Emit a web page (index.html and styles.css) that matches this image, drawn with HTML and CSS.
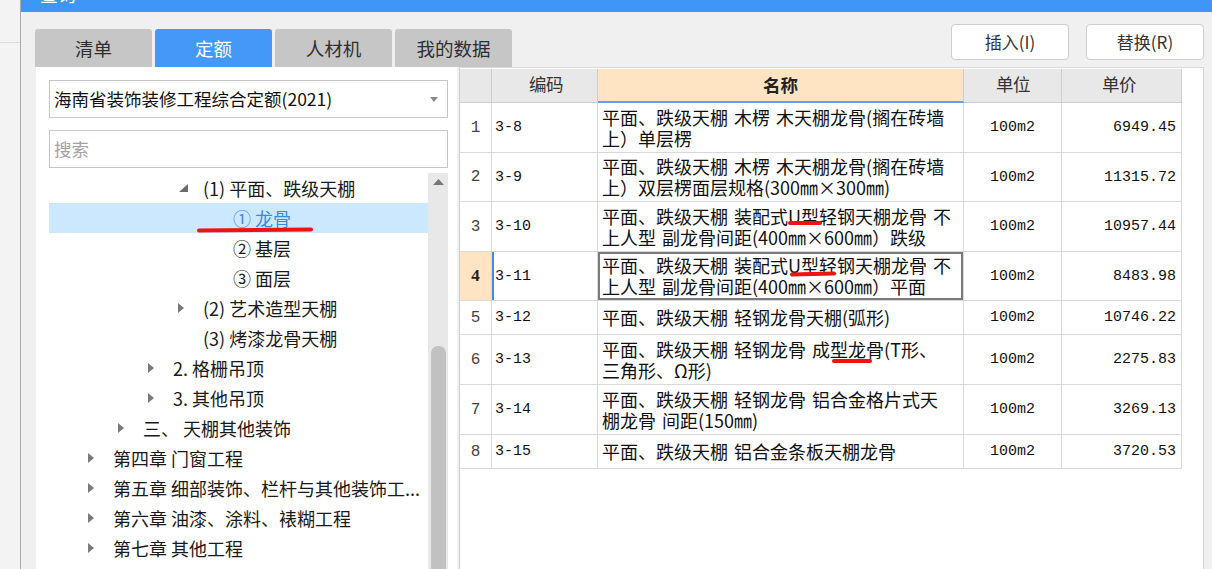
FILE: index.html
```html
<!DOCTYPE html>
<html lang="zh-CN">
<head>
<meta charset="utf-8">
<title>查询</title>
<link rel="stylesheet" href="styles.css">
</head>
<body>
<div class="desk"><div class="desk-line"></div></div>
<div class="win">
  <div class="titlebar"><div class="title">查询</div></div>
  <div class="topbar">
    <div class="tabs">
      <div class="tab">清单</div>
      <div class="tab active">定额</div>
      <div class="tab">人材机</div>
      <div class="tab">我的数据</div>
    </div>
    <div class="actions">
      <button class="btn">插入(I)</button>
      <button class="btn">替换(R)</button>
    </div>
  </div>
  <div class="main">
    <div class="left">
      <div class="select">
        <span>海南省装饰装修工程综合定额(2021)</span>
        <svg class="caret" width="8" height="5" viewBox="0 0 8 5"><path d="M0 0H8L4 5Z" fill="#8a8a8a"/></svg>
      </div>
      <div class="search">搜索</div>
      <div class="tree">
        <div class="nodes">
          <div class="node l3"><span class="tw"><svg width="9" height="8" viewBox="0 0 9 8"><path d="M9 0V8H0Z" fill="#6b6b6b"/></svg></span><span class="lbl">(1) 平面、跌级天棚</span></div>
          <div class="node l4 sel"><span class="tw"></span><span class="lbl">① 龙骨</span><span class="ink ink-tree"></span></div>
          <div class="node l4"><span class="tw"></span><span class="lbl">② 基层</span></div>
          <div class="node l4"><span class="tw"></span><span class="lbl">③ 面层</span></div>
          <div class="node l3"><span class="tw"><svg width="6" height="10" viewBox="0 0 6 10"><path d="M0 0L6 5L0 10Z" fill="#7a7a7a"/></svg></span><span class="lbl">(2) 艺术造型天棚</span></div>
          <div class="node l3"><span class="tw"></span><span class="lbl">(3) 烤漆龙骨天棚</span></div>
          <div class="node l2"><span class="tw"><svg width="6" height="10" viewBox="0 0 6 10"><path d="M0 0L6 5L0 10Z" fill="#7a7a7a"/></svg></span><span class="lbl">2. 格栅吊顶</span></div>
          <div class="node l2"><span class="tw"><svg width="6" height="10" viewBox="0 0 6 10"><path d="M0 0L6 5L0 10Z" fill="#7a7a7a"/></svg></span><span class="lbl">3. 其他吊顶</span></div>
          <div class="node l1"><span class="tw"><svg width="6" height="10" viewBox="0 0 6 10"><path d="M0 0L6 5L0 10Z" fill="#7a7a7a"/></svg></span><span class="lbl">三、 天棚其他装饰</span></div>
          <div class="node l0"><span class="tw"><svg width="6" height="10" viewBox="0 0 6 10"><path d="M0 0L6 5L0 10Z" fill="#7a7a7a"/></svg></span><span class="lbl">第四章 门窗工程</span></div>
          <div class="node l0"><span class="tw"><svg width="6" height="10" viewBox="0 0 6 10"><path d="M0 0L6 5L0 10Z" fill="#7a7a7a"/></svg></span><span class="lbl">第五章 细部装饰、栏杆与其他装饰工...</span></div>
          <div class="node l0"><span class="tw"><svg width="6" height="10" viewBox="0 0 6 10"><path d="M0 0L6 5L0 10Z" fill="#7a7a7a"/></svg></span><span class="lbl">第六章 油漆、涂料、裱糊工程</span></div>
          <div class="node l0"><span class="tw"><svg width="6" height="10" viewBox="0 0 6 10"><path d="M0 0L6 5L0 10Z" fill="#7a7a7a"/></svg></span><span class="lbl">第七章 其他工程</span></div>
        </div>
        <div class="vscroll">
          <div class="vs-up"><svg width="11" height="6" viewBox="0 0 11 6"><path d="M0 6L5.5 0L11 6Z" fill="#777"/></svg></div>
          <div class="vs-thumb"></div>
        </div>
      </div>
    </div>
    <div class="right">
      <div class="grid">
        <div class="row head">
          <div class="c num"></div>
          <div class="c code">编码</div>
          <div class="c name hot">名称</div>
          <div class="c unit">单位</div>
          <div class="c price">单价</div>
        </div>
        <div class="row h50">
          <div class="c num">1</div>
          <div class="c code">3-8</div>
          <div class="c name">平面、跌级天棚 木楞 木天棚龙骨(搁在砖墙<br>上）单层楞</div>
          <div class="c unit">100m2</div>
          <div class="c price">6949.45</div>
        </div>
        <div class="row h49">
          <div class="c num">2</div>
          <div class="c code">3-9</div>
          <div class="c name">平面、跌级天棚 木楞 木天棚龙骨(搁在砖墙<br>上）双层楞面层规格(300㎜×300㎜)</div>
          <div class="c unit">100m2</div>
          <div class="c price">11315.72</div>
        </div>
        <div class="row h50">
          <div class="c num">3</div>
          <div class="c code">3-10</div>
          <div class="c name">平面、跌级天棚 装配式U型轻钢天棚龙骨 不<br>上人型 副龙骨间距(400㎜×600㎜）跌级<span class="ink ink-r3"></span></div>
          <div class="c unit">100m2</div>
          <div class="c price">10957.44</div>
        </div>
        <div class="row h49 cur">
          <div class="c num">4</div>
          <div class="c code">3-11</div>
          <div class="c name">平面、跌级天棚 装配式U型轻钢天棚龙骨 不<br>上人型 副龙骨间距(400㎜×600㎜）平面<span class="ink ink-r4"></span></div>
          <div class="c unit">100m2</div>
          <div class="c price">8483.98</div>
        </div>
        <div class="row h34">
          <div class="c num">5</div>
          <div class="c code">3-12</div>
          <div class="c name">平面、跌级天棚 轻钢龙骨天棚(弧形)</div>
          <div class="c unit">100m2</div>
          <div class="c price">10746.22</div>
        </div>
        <div class="row h50">
          <div class="c num">6</div>
          <div class="c code">3-13</div>
          <div class="c name">平面、跌级天棚 轻钢龙骨 成型龙骨(T形、<br>三角形、Ω形)<span class="ink ink-r6"></span></div>
          <div class="c unit">100m2</div>
          <div class="c price">2275.83</div>
        </div>
        <div class="row h50">
          <div class="c num">7</div>
          <div class="c code">3-14</div>
          <div class="c name">平面、跌级天棚 轻钢龙骨 铝合金格片式天<br>棚龙骨 间距(150㎜)</div>
          <div class="c unit">100m2</div>
          <div class="c price">3269.13</div>
        </div>
        <div class="row h34">
          <div class="c num">8</div>
          <div class="c code">3-15</div>
          <div class="c name">平面、跌级天棚 铝合金条板天棚龙骨</div>
          <div class="c unit">100m2</div>
          <div class="c price">3720.53</div>
        </div>
      </div>
    </div>
  </div>
</div>
</body>
</html>
```
FILE: styles.css
```css
* { box-sizing: border-box; margin: 0; padding: 0; }
html, body { width: 1212px; height: 569px; overflow: hidden; }
body {
  background: #f0f0f0;
  font-family: "Noto Sans CJK SC", "Microsoft YaHei", sans-serif;
  color: #222;
  display: flex;
}

.desk { width: 21px; flex: none; background: #f3f3f3; border-right: 1px solid #a9a9a9; }
.desk-line { height: 43px; border-bottom: 1px solid #dcdcdc; }

.win { flex: 1; min-width: 0; display: flex; flex-direction: column; }
.titlebar { height: 12px; flex: none; background: #3f96f6; overflow: hidden; padding-left: 19px; }
.title { color: #fff; font-size: 18px; line-height: 18px; margin-top: -15px; }

.topbar {
  height: 55px; flex: none;
  display: flex; justify-content: space-between; align-items: flex-start;
  padding: 0 8px 0 14px;
}
.tabs { display: flex; gap: 3px; margin-top: 17px; }
.tab {
  width: 117px; height: 38px;
  background: #c6c6c6; border-radius: 3px 3px 0 0;
  font-size: 18.5px; line-height: 38px; text-align: center; color: #2e2e2e;
}
.tab.active { background: #4499f8; color: #fff; }
.actions { display: flex; gap: 17px; margin-top: 12px; }
.btn {
  width: 118px; height: 36px;
  background: #fff; border: 1px solid #cdcdcd; border-radius: 4px;
  font-family: inherit; font-size: 17px; color: #333; line-height: 34px; text-align: center;
}

.main { flex: 1; min-height: 0; display: flex; gap: 2px; padding: 0 8px 0 15px; }

.left {
  width: 421px; flex: none; background: #fff;
  padding: 13px 0 0 13px;
  display: flex; flex-direction: column;
}
.select, .search {
  width: 399px; height: 38px; flex: none;
  border: 1px solid #c6c6c6; background: #fff;
  font-size: 17.5px; line-height: 36px; padding: 0 9px 0 4px;
}
.select { display: flex; align-items: center; justify-content: space-between; color: #111; margin-bottom: 12px; }
.search { color: #a3a3a3; margin-bottom: 5px; }
.caret { flex: none; }

.tree { width: 399px; flex: 1; min-height: 0; display: flex; overflow: hidden; }
.nodes { width: 379px; flex: none; }
.node {
  position: relative;
  height: 30px; display: flex; align-items: center;
  font-size: 18px; line-height: 30px; color: #1a1a1a; white-space: nowrap;
  padding-right: 4px;
}
.node.l0 { padding-left: 39px; }
.node.l1 { padding-left: 69px; }
.node.l2 { padding-left: 99px; }
.node.l3 { padding-left: 129px; }
.node.l4 { padding-left: 159px; }
.tw { width: 25px; flex: none; display: flex; align-items: center; }
.node.l3:first-child .tw { padding-left: 1px; }
.lbl { overflow: hidden; }
.node.sel { background: #cce8ff; }
.node.sel .lbl { color: #3a88e6; }

.vscroll { width: 20px; flex: none; background: #e8e8e8; display: flex; flex-direction: column; align-items: center; }
.vs-up { height: 20px; display: flex; align-items: center; justify-content: center; padding-top: 1px; }
.vs-thumb { width: 15px; height: 260px; margin-top: 156px; background: #c1c1c1; border-radius: 7px 7px 0 0; }

.right {
  flex: 1; min-width: 0; background: #fff;
  border-left: 1px solid #cfcfcf; border-right: 1px solid #d2d2d2; border-top: 1px solid #dadada;
  padding-top: 1px;
}
.row { display: grid; grid-template-columns: 32px 106px 366px 98px 120px; }
.h34 { height: 34px; }
.h49 { height: 49px; }
.h50 { height: 50px; }
.c {
  border-right: 1px solid #d9d9d9; border-bottom: 1px solid #d9d9d9;
  display: flex; align-items: center; color: #111;
}
.head { height: 34px; }
.head .c {
  background: #e8e8e8; border-color: #cdcdcd; justify-content: center;
  font-size: 17.5px; color: #333; line-height: 24px; word-spacing: 0;
}
.head .c.hot { background: #ffe4c4; font-weight: 700; color: #222; border-bottom: 2px solid #5aa0ee; }
.num { justify-content: center; font-family: "Liberation Mono", monospace; font-size: 16px; color: #444; }
.code { padding-left: 3px; font-family: "Liberation Mono", monospace; font-size: 15px; }
.name { position: relative; padding: 0 4px; font-size: 18px; line-height: 21px; word-spacing: 2px; white-space: nowrap; }
.unit { justify-content: center; font-family: "Liberation Mono", monospace; font-size: 15px; }
.price { justify-content: flex-end; padding-right: 5px; font-family: "Liberation Mono", monospace; font-size: 15px; }

.cur .num { background: #ffe4c4; font-family: "Liberation Serif", serif; font-weight: 700; font-size: 17px; color: #222; }
.cur .code { box-shadow: inset 2px 0 0 #3d8ef0; }
.cur .name { box-shadow: inset 0 0 0 2px #7a7a7a; }

.ink { position: absolute; height: 4px; background: #f01212; border-radius: 2px; }
.ink-tree { left: 148px; top: 25px; width: 116px; transform: rotate(-0.6deg); }
.ink-r3 { left: 190px; top: 19px; width: 34px; }
.ink-r4 { left: 192px; top: 20px; width: 46px; transform: rotate(-1.5deg); }
.ink-r6 { left: 234px; top: 24px; width: 40px; }
```
